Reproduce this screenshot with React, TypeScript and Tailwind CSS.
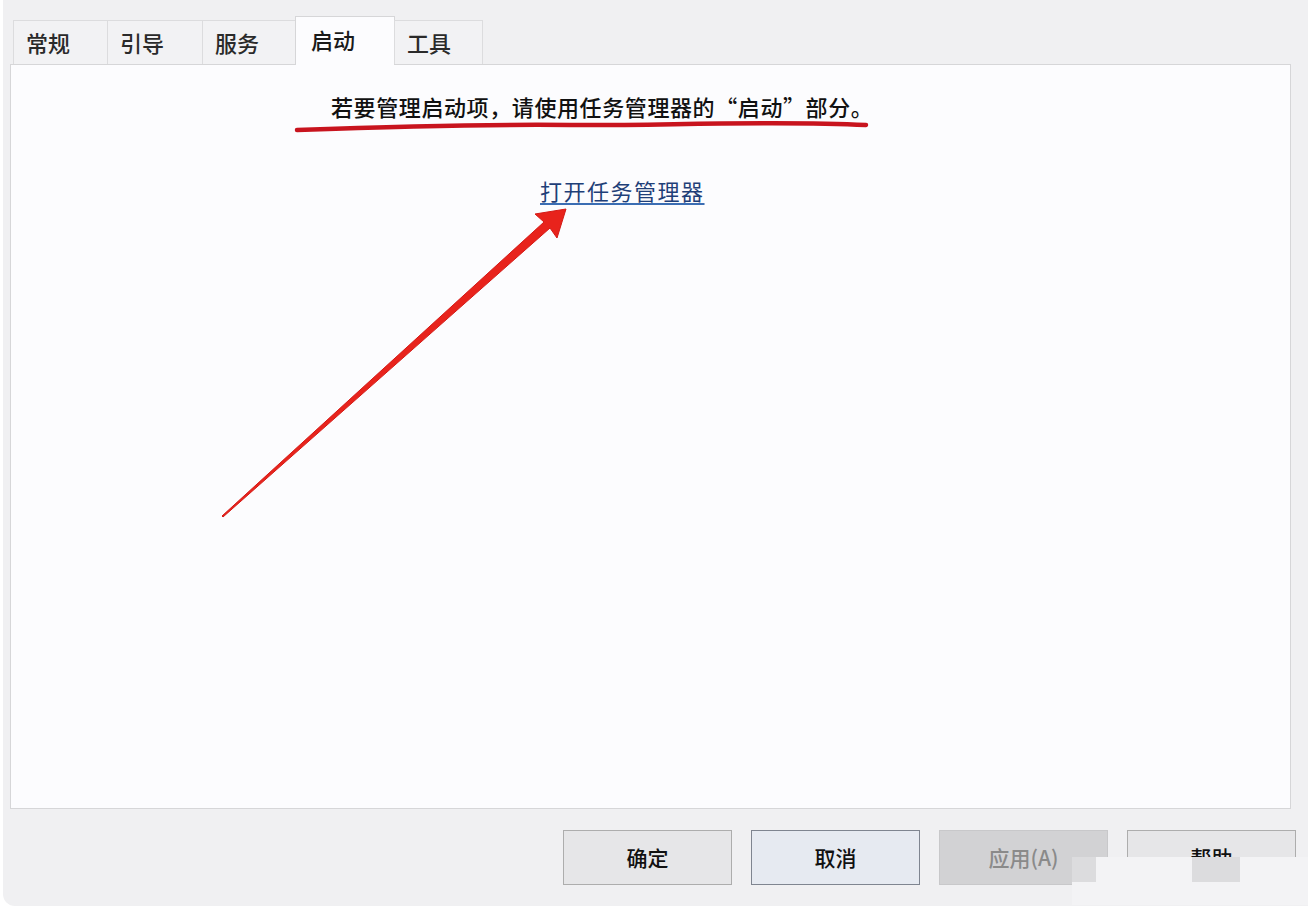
import React from 'react';

const tabs = [
    { label: '常规', w: 'w-[95px]' },
    { label: '引导', w: 'w-[96px]' },
    { label: '服务', w: 'w-[94px]' },
    { label: '启动', w: 'w-[100px]', active: true },
    { label: '工具', w: 'w-[89px]' },
];

const buttons = [
    { label: '确定', cls: 'bg-[#e6e6e8] border-[#adadad] text-[#111]' },
    { label: '取消', cls: 'bg-[#e6eaf1] border-[#7f8590] text-[#111]' },
    { label: '应用(A)', cls: 'bg-[#d2d2d4] border-[#c8c8ca] text-[#8a8a8a]' },
    { label: '帮助', cls: 'bg-[#e6e6e8] border-[#adadad] text-[#111]' },
];

export default function App() {
    return (
        <div
            className="w-[1308px] h-[922px] bg-white overflow-hidden relative"
            style={{ fontFamily: '"Noto Sans CJK SC", "Noto Sans", sans-serif' }}
        >
            <div className="h-[906px] ml-[3px] bg-[#f0f0f2] rounded-bl-[12px] flex flex-col pt-[16px] pl-[7px] pr-[17px]">
                {/* Tabs */}
                <div className="h-[48px] flex items-end pl-[3px] relative z-10">
                    {tabs.map(t => (
                        <div
                            key={t.label}
                            className={
                                t.active
                                    ? `${t.w} h-[49px] -mb-px -ml-px bg-[#fcfcfe] border border-b-0 border-[#d6d6d8] pl-[15px] pt-[8px] text-[22px] leading-[28px] text-[#1a1a1a] font-medium`
                                    : `${t.w} h-[44px] bg-[#f2f2f4] border border-b-0 border-[#dcdcde] -ml-px first:ml-0 pl-[12px] pt-[7px] text-[22px] leading-[28px] text-[#2a2a2a] font-medium`
                            }
                        >
                            {t.label}
                        </div>
                    ))}
                </div>

                {/* Panel */}
                <div className="h-[745px] bg-[#fcfcfe] border border-[#d6d6d8] relative">
                    <div className="pt-[26px] pl-[320px] text-[22px] leading-[30px] text-[#111] font-medium tracking-[0.6px]">
                        若要管理启动项，请使用任务管理器的“启动”部分。
                    </div>
                    <div className="pt-[54px] pl-[529px] text-[22px] leading-[30px]">
                        <span className="text-[#1f3f78] underline underline-offset-[3px] decoration-[#3b6db3] tracking-[1.5px]">
                            打开任务管理器
                        </span>
                    </div>

                    {/* red annotations */}
                    <svg className="absolute left-0 top-0 pointer-events-none" width="1281" height="745">
                        <path
                            d="M286 65 C 400 61, 480 59, 560 60 S 760 55, 855 60"
                            stroke="#c8141e"
                            strokeWidth="4.5"
                            fill="none"
                            strokeLinecap="round"
                        />
                        <path
                            d="M211 451 L212 452 L539 163 L546 173 L555 144 L524 149 L533 157 Z"
                            fill="#e8231c"
                            stroke="#d41a16"
                            strokeWidth="1"
                            strokeLinejoin="round"
                        />
                    </svg>
                </div>

                {/* Buttons */}
                <div className="flex gap-[19px] mt-[21px] ml-[553px] -mr-[6px]">
                    {buttons.map(b => (
                        <div
                            key={b.label}
                            className={`w-[169px] h-[55px] border flex items-center justify-center text-[21px] font-medium ${b.cls}`}
                        >
                            {b.label}
                        </div>
                    ))}
                </div>
            </div>

            {/* watermark smudge */}
            <div className="absolute left-[1072px] top-[857px] w-[236px] h-[48px] bg-[#f3f3f5]" />
            <div className="absolute left-[1192px] top-[857px] w-[48px] h-[25px] bg-[#dcdcde]" />
            <div className="absolute left-[1072px] top-[857px] w-[24px] h-[25px] bg-[#dcdcde]" />
        </div>
    );
}
